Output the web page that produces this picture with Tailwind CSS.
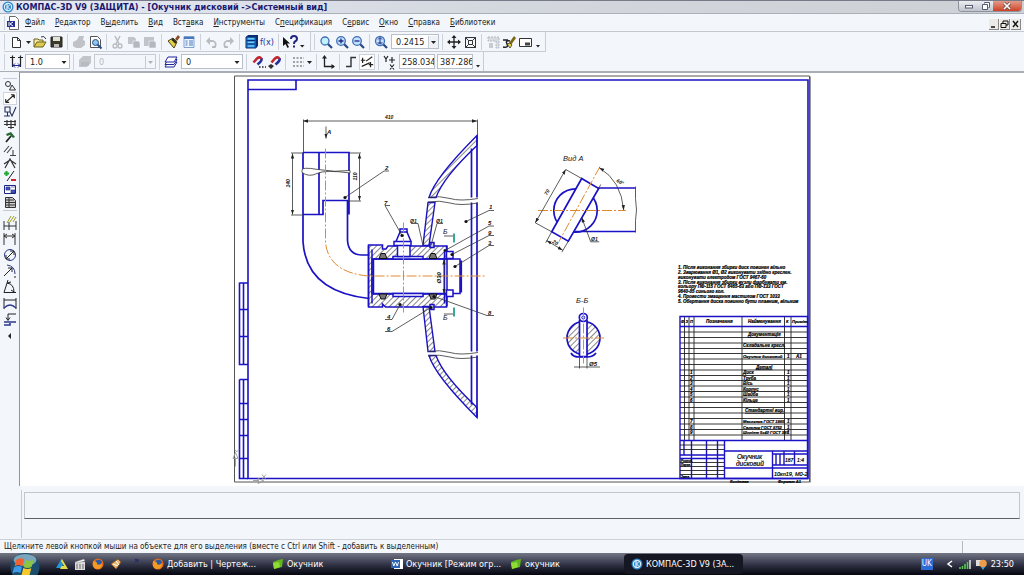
<!DOCTYPE html>
<html lang="uk">

<head>
    <meta charset="UTF-8">
    <meta name="viewport" content="width=device-width, initial-scale=1.0">
    <title>КОМПАС-3D V9</title>
    <script src="https://cdn.jsdelivr.net/npm/@tailwindcss/browser@4"></script>
</head>

<body class="flex flex-col h-screen overflow-hidden bg-[#f3f6fb] font-['DejaVu_Sans_Condensed','DejaVu_Sans',sans-serif] text-[8px] leading-3 text-[#222]">

    <!-- Title bar -->
    <header class="flex h-[14px] shrink-0 items-center border-t border-[#777b88] border-b border-b-[#a9b1bb] bg-linear-to-r from-[#e6e9f3] via-[#d3d7de] to-[#cdd0d4] pl-0.5">
        <svg class="size-3 shrink-0" viewBox="0 0 12 12"><circle cx="6" cy="6" r="5.500" fill="#2e86c8"/><circle cx="6" cy="6" r="3.600" fill="none" stroke="#d8efff" stroke-width="1.200"/><path d="M5 3v6M8 3.500L5.500 6 8 8.500" stroke="#fff" fill="none"/></svg>
        <h1 class="ml-0.5 whitespace-nowrap text-[9px] font-bold text-[#191970]">КОМПАС-3D V9 (ЗАЩИТА) - [Окучник дисковий -&gt;Системный вид]</h1>
        <div class="ml-auto mr-0.5 flex h-[11px] self-start overflow-hidden rounded-b border border-t-0 border-[#8d939c]">
            <button class="flex w-5 items-center justify-center bg-linear-to-b from-[#eceef2] to-[#bfc4cd]" aria-label="Свернуть"><svg class="h-2 w-2.5" viewBox="0 0 10 8"><rect x="1.500" y="3.500" width="7" height="2.500" fill="#fff" stroke="#555b70"/></svg></button>
            <button class="flex w-[14px] items-center justify-center bg-linear-to-b from-[#eceef2] to-[#bfc4cd]" aria-label="Восстановить"><svg class="h-2 w-2.5" viewBox="0 0 10 8"><path d="M3.500 1.500V.5h5v5h-1M1.500 2.500h5v5h-5z" fill="#fff" stroke="#555b70"/></svg></button>
            <button class="flex w-7 items-center justify-center bg-linear-to-b from-[#e39a88] to-[#cc3f22]" aria-label="Закрыть"><svg class="size-2" viewBox="0 0 8 8"><path d="M1 1l6 6M7 1L1 7" stroke="#64433e" stroke-width="3"/><path d="M1 1l6 6M7 1L1 7" stroke="#fff" stroke-width="1.700"/></svg></button>
        </div>
    </header>

    <!-- Menu -->
    <nav class="flex h-[18px] shrink-0 items-center gap-2.5 border-b border-[#c3c7cf] pl-1">
        <div class="flex items-center gap-1 border-l border-[#cfd3da]">
            <svg class="ml-0.5 h-[14px] w-3" viewBox="0 0 12 14"><path d="M2.500.5h6l3 3v10h-9z" fill="#fff" stroke="#666"/><path d="M0 5h8v6H0z" fill="#29308f"/><path d="M2 6v4M6 6L3 8l3 2" stroke="#fff" fill="none"/></svg>
            <a href="#" class="ml-0.5"><u>Ф</u>айл</a>
        </div>
        <a href="#"><u>Р</u>едактор</a>
        <a href="#">В<u>ы</u>делить</a>
        <a href="#"><u>В</u>ид</a>
        <a href="#">Вст<u>а</u>вка</a>
        <a href="#"><u>И</u>нструменты</a>
        <a href="#">С<u>п</u>ецификация</a>
        <a href="#">С<u>е</u>рвис</a>
        <a href="#"><u>О</u>кно</a>
        <a href="#"><u>С</u>правка</a>
        <a href="#"><u>Б</u>иблиотеки</a>
        <div class="ml-auto mr-[3px] flex gap-px self-end pb-px">
            <button class="h-[11px] w-2.5 border-b border-r border-[#888] bg-[#eceae6]" aria-label="Свернуть документ"><svg viewBox="0 0 9 10"><path d="M2 8h4" stroke="#111" stroke-width="1.500"/></svg></button>
            <button class="h-[11px] w-2.5 border-b border-r border-[#888] bg-[#eceae6]" aria-label="Восстановить документ"><svg viewBox="0 0 9 10"><path d="M3 4V2h5v4H6M1 4.500h5v4H1z" fill="none" stroke="#111"/></svg></button>
            <button class="h-[11px] w-2.5 border-b border-r border-[#888] bg-[#eceae6]" aria-label="Закрыть документ"><svg viewBox="0 0 9 10"><path d="M2 2l5 6M7 2L2 8" stroke="#111" stroke-width="1.400"/></svg></button>
        </div>
    </nav>

    <!-- Standard and view toolbars -->
    <div class="flex h-5 shrink-0 pl-1">
        <div class="flex items-center border-b border-r border-[#c8ccd4] pr-1">
            <span class="mr-[3px] h-4 w-px bg-[#cdd1d9]"></span>
            <button class="w-4" aria-label="Создать"><svg viewBox="0 0 16 16"><path d="M4.500 3.500h5l3 3v7h-8z" fill="#fff" stroke="#333"/><path d="M9.500 3.500v3h3" fill="none" stroke="#333"/></svg></button>
            <button class="w-2" aria-label="Список"><svg viewBox="0 0 8 16"><path d="M2 7h5L4.500 10z" fill="#222"/></svg></button>
            <button class="w-4" aria-label="Открыть"><svg viewBox="0 0 16 16"><path d="M2 13V5h4l1 1h4v2" fill="#f5e9a0" stroke="#6b6420"/><path d="M2 13l3-5h9l-3 5z" fill="#e0c952" stroke="#6b6420"/><path d="M9 3q3-2 5 2" fill="none" stroke="#333"/></svg></button>
            <button class="w-4" aria-label="Сохранить"><svg viewBox="0 0 16 16"><path d="M3 3h11v10H3z" fill="#3a3b26" stroke="#222"/><path d="M5 3h7v4H5z" fill="#dfe3dc"/><path d="M6 10h5v3H6z" fill="#bbb"/></svg></button>
            <span class="mx-[3px] h-4 w-px bg-[#cdd1d9]"></span>
            <button class="w-4" aria-label="Печать"><svg viewBox="0 0 16 16"><path d="M2 8l4-2 2-4h5l-1 4 2 1v4l-4 3H5l-3-2z" fill="#c0c2c8"/></svg></button>
            <button class="w-4" aria-label="Просмотр"><svg viewBox="0 0 16 16"><path d="M3.500 2.500h7l3 3v8h-10z" fill="#fff" stroke="#555"/><circle cx="8.500" cy="8.500" r="3" fill="#8fc3e8" stroke="#234f8c"/><path d="M10.500 10.500l4 4" stroke="#234f8c" stroke-width="2"/></svg></button>
            <span class="mx-[3px] h-4 w-px bg-[#cdd1d9]"></span>
            <button class="w-4" aria-label="Вырезать"><svg viewBox="0 0 16 16"><path d="M5 2l4 8M10 2L6 10" stroke="#b8bbc2" stroke-width="1.500"/><circle cx="5" cy="12" r="2" fill="none" stroke="#b8bbc2" stroke-width="1.300"/><circle cx="10" cy="12" r="2" fill="none" stroke="#b8bbc2" stroke-width="1.300"/></svg></button>
            <button class="w-4" aria-label="Копировать"><svg viewBox="0 0 16 16"><path d="M2 3h6l2 2v5H2z" fill="#c2c4ca"/><path d="M7 7h6l1 2v5H7z" fill="#b4b7be" stroke="#f3f6fb" stroke-width=".6"/></svg></button>
            <button class="w-4" aria-label="Вставить"><svg viewBox="0 0 16 16"><path d="M2 3h10v9H2z" fill="#c2c4ca"/><path d="M7 7h6l1 2v5H7z" fill="#b4b7be" stroke="#f3f6fb" stroke-width=".6"/></svg></button>
            <span class="mx-[3px] h-4 w-px bg-[#cdd1d9]"></span>
            <button class="w-4" aria-label="Копировать свойства"><svg viewBox="0 0 16 16"><path d="M10 5l3-4 2 2-3 4z" fill="#8a4d28"/><path d="M3 7l5-3 4 4-3 6z" fill="#e4d14a" stroke="#4c4710"/><path d="M7 5l4 4" stroke="#222" stroke-width="2"/></svg></button>
            <button class="w-4" aria-label="Свойства"><svg viewBox="0 0 16 16"><path d="M3 2.500h10v11H3z" fill="#eef5ff" stroke="#7fa1cf"/><path d="M3 4h10" stroke="#4778bd" stroke-width="2"/><path d="M4.500 7h2M4.500 9h2M4.500 11h2M8 7h4M8 9h4M8 11h4" stroke="#4778bd"/></svg></button>
            <span class="mx-[3px] h-4 w-px bg-[#cdd1d9]"></span>
            <button class="w-4" aria-label="Отменить"><svg viewBox="0 0 16 16"><path d="M4 7h5q4 1 2 6H8" fill="none" stroke="#b8bbc2" stroke-width="1.800"/><path d="M6 3v8L2 7z" fill="#b8bbc2"/></svg></button>
            <button class="w-4" aria-label="Повторить"><svg viewBox="0 0 16 16"><path d="M12 7H7q-4 1-2 6h3" fill="none" stroke="#b8bbc2" stroke-width="1.800"/><path d="M10 3v8l4-4z" fill="#b8bbc2"/></svg></button>
            <span class="mx-[3px] h-4 w-px bg-[#cdd1d9]"></span>
            <button class="w-4" aria-label="Менеджер библиотек"><svg viewBox="0 0 16 16"><path d="M3 3l2-2h10v11l-2 2H3z" fill="#0c2d72"/><path d="M3 3h10v11H3z" fill="#2585d6" stroke="#0c2d72"/><path d="M4 6.500h8M4 10h8" stroke="#0c2d72"/><path d="M5 4.800h6M5 8.300h6M5 12h6" stroke="#8ce4ff"/></svg></button>
            <button class="w-4 text-[9px] text-[#25309b]">f(x)</button>
            <span class="mx-[3px] h-4 w-px bg-[#cdd1d9]"></span>
            <button class="w-4" aria-label="Справка"><svg viewBox="0 0 16 16"><path d="M1 3v9l2.500-2 2 4 1.500-1-2-3.500H8z" fill="#111"/><path d="M9 5q0-3 3-3t3 3q0 1.500-2 2.500-1 .5-1 2.500" fill="none" stroke="#20257f" stroke-width="2"/><path d="M11 11.500h2v2h-2z" fill="#20257f"/></svg></button>
            <button class="w-2" aria-label="Ещё"><svg viewBox="0 0 8 16"><path d="M2 11h4.500L4.200 13.500z" fill="#222"/></svg></button>
        </div>
        <div class="flex items-center border-b border-r border-[#c8ccd4] pr-1">
            <span class="mx-[3px] h-4 w-px bg-[#cdd1d9]"></span>
            <button class="w-4" aria-label="Увеличить рамкой"><svg viewBox="0 0 16 16"><path d="M9.500 9.500l4.500 4.500" stroke="#2a4683" stroke-width="2.200"/><circle cx="7" cy="7" r="4" fill="#c2f0ff" stroke="#3e70b8" stroke-width="1.300"/></svg></button>
            <button class="w-4" aria-label="Увеличить"><svg viewBox="0 0 16 16"><path d="M9.500 9.500l4.500 4.500" stroke="#2a4683" stroke-width="2.200"/><circle cx="7" cy="7" r="4.300" fill="#c2e2ff" stroke="#3e70b8" stroke-width="1.300"/><path d="M7 4.500v5M4.500 7h5" stroke="#20257f" stroke-width="1.300"/></svg></button>
            <button class="w-4" aria-label="Уменьшить"><svg viewBox="0 0 16 16"><path d="M9.500 9.500l4.500 4.500" stroke="#2a4683" stroke-width="2.200"/><circle cx="7" cy="7" r="4.300" fill="#c2e2ff" stroke="#3e70b8" stroke-width="1.300"/><path d="M4.500 7h5" stroke="#20257f" stroke-width="1.300"/></svg></button>
            <span class="mx-[3px] h-4 w-px bg-[#cdd1d9]"></span>
            <button class="w-4" aria-label="Масштаб"><svg viewBox="0 0 16 16"><path d="M9.500 9.500l4.500 4.500" stroke="#2a4683" stroke-width="2.200"/><circle cx="7" cy="7" r="4.500" fill="#c2e2ff" stroke="#3e70b8" stroke-width="1.300"/><path d="M7 4v6M5 5.500L7 3.500l2 2M4.500 9h5" stroke="#20257f" fill="none"/></svg></button>
            <span class="ml-0.5 flex h-[15px] w-12 items-center border border-[#b7bfca] bg-white">
                <select class="w-9 appearance-none pl-1 text-[9px] text-[#222]" aria-label="Текущий масштаб"><option>0.2415</option></select>
                <svg class="ml-auto h-3 w-2.5 border-l border-[#c5cad3] bg-[#eef1f6]" viewBox="0 0 9 12"><path d="M2 5h5L4.500 8z" fill="#222"/></svg>
            </span>
            <span class="mx-[3px] h-4 w-px bg-[#cdd1d9]"></span>
            <button class="w-4" aria-label="Сдвинуть"><svg viewBox="0 0 16 16"><path d="M8 2v12M2 8h12" stroke="#222" stroke-width="1.300"/><path d="M8 1l2.500 3h-5zM8 15l2.500-3h-5zM1 8l3-2.500v5zM15 8l-3-2.500v5z" fill="#222"/></svg></button>
            <button class="w-4" aria-label="Показать все"><svg viewBox="0 0 16 16"><path d="M3.500 3.500h10v10h-10zM6.500 6.500h4v4h-4zM3.500 3.500l3 3M13.500 3.500l-3 3M3.500 13.500l3-3M13.500 13.500l-3-3" fill="none" stroke="#333"/></svg></button>
            <span class="mx-[3px] h-4 w-px bg-[#cdd1d9]"></span>
            <button class="w-4" aria-label="Перестроить"><svg viewBox="0 0 16 16"><path d="M3 3h11v11h-3V7H3z" fill="#d8dbe1" stroke="#b5b9c1" stroke-dasharray="2 1"/><path d="M4 9h4v5H4z" fill="#c8cbd1"/></svg></button>
            <button class="w-4" aria-label="Обновить изображение"><svg viewBox="0 0 16 16"><path d="M2 6h5M2 13q6 1 4-3t3-3" fill="none" stroke="#222" stroke-width="1.500"/><path d="M8 9l5-7 2 2-5 7z" fill="#7b6614"/><path d="M6 10l3-1 2 2-2 3z" fill="#e4d14a" stroke="#222" stroke-width=".7"/></svg></button>
            <button class="w-4" aria-label="Экран"><svg viewBox="0 0 16 16"><path d="M2.500 4.500h12v8h-12z" fill="#fff" stroke="#333"/><path d="M8 8.500h5v3H8z" fill="#444"/></svg></button>
            <button class="w-2" aria-label="Ещё"><svg viewBox="0 0 8 16"><path d="M3 11h4L5 13.500z" fill="#222"/></svg></button>
        </div>
    </div>

    <!-- Current state toolbar -->
    <div class="flex h-5 shrink-0 border-b border-[#a9adb5] pl-1">
        <div class="flex items-center border-r border-[#c8ccd4] pr-0.5">
            <span class="mr-[3px] h-4 w-px bg-[#cdd1d9]"></span>
            <button class="w-4" aria-label="Шаг курсора"><svg viewBox="0 0 16 16"><path d="M4.500 5v8M12.500 5v8" stroke="#222" stroke-width="1.200"/><path d="M2 3.500h5M10 3.500h5M4.500 1.500v4M12.500 1.500v4" stroke="#222" stroke-width="1.200"/><path d="M5 11.500h7M7 9.500l-2 2 2 2M10 9.500l2 2-2 2" fill="none" stroke="#20259a"/></svg></button>
            <span class="ml-px flex h-[15px] w-[45px] items-center border border-[#b7bfca] bg-white">
                <select class="w-7 appearance-none pl-1 text-[9px] text-[#222]" aria-label="Шаг"><option>1.0</option></select>
                <svg class="ml-auto h-3 w-2.5" viewBox="0 0 9 12"><path d="M2 5h5L4.500 8z" fill="#222"/></svg>
            </span>
            <span class="mx-[3px] h-4 w-px bg-[#cdd1d9]"></span>
            <button class="w-4" aria-label="Вид"><svg viewBox="0 0 16 16"><path d="M2 6l4-4h8v7l-4 4H2z" fill="#c3c5cb"/><path d="M4 9h8M4 11h8" stroke="#aeb1b8"/></svg></button>
            <span class="ml-px flex h-[15px] w-[62px] items-center border border-[#c5cad3] bg-[#f3f6fb]">
                <select class="w-10 appearance-none pl-1 text-[9px] text-[#b8bbc2]" aria-label="Номер вида" disabled><option>0</option></select>
                <svg class="ml-auto h-3 w-2.5 border-l border-[#c5cad3]" viewBox="0 0 9 12"><path d="M2 5h5L4.500 8z" fill="#b0b3ba"/></svg>
            </span>
            <span class="mx-[3px] h-4 w-px bg-[#cdd1d9]"></span>
            <button class="w-4" aria-label="Слои"><svg viewBox="0 0 16 16"><path d="M2 13l3-5h9l-3 5z" fill="#fff" stroke="#20259a"/><path d="M2 10.500l3-5h9l-3 5z" fill="#fff" stroke="#20259a"/><path d="M2 8l3-5h9l-3 5z" fill="#fff" stroke="#20259a"/></svg></button>
            <span class="ml-0.5 flex h-[15px] w-[62px] items-center border border-[#b7bfca] bg-white">
                <select class="w-10 appearance-none pl-1 text-[9px] text-[#222]" aria-label="Слой"><option>0</option></select>
                <svg class="ml-auto h-3 w-2.5" viewBox="0 0 9 12"><path d="M2 5h5L4.500 8z" fill="#222"/></svg>
            </span>
            <span class="mx-[3px] h-4 w-px bg-[#cdd1d9]"></span>
            <button class="w-4" aria-label="Установка привязок"><svg viewBox="0 0 16 16"><path d="M3.500 8.500L7 4.500Q10 2 11.500 5" fill="none" stroke="#c1272d" stroke-width="2.600"/><path d="M11.500 4.500q1 2-4 6" fill="none" stroke="#25309b" stroke-width="2.600"/><path d="M9 13h1.500M12 13h1.500M15 13h1" stroke="#222" stroke-width="1.500"/></svg></button>
            <button class="w-4" aria-label="Запретить привязки"><svg viewBox="0 0 16 16"><path d="M5.500 8.500L9 4.500Q12 2 13.500 5" fill="none" stroke="#c1272d" stroke-width="2.600"/><path d="M13.500 4.500q1 2-4 6" fill="none" stroke="#25309b" stroke-width="2.600"/><path d="M2 12l3-2 3 2-3 3z" fill="#333"/></svg></button>
            <span class="mx-[3px] h-4 w-px bg-[#cdd1d9]"></span>
            <button class="w-4" aria-label="Сетка"><svg viewBox="0 0 16 16"><path d="M4 4h11M4 8h11M4 12h11" stroke="#888" stroke-width="1.500" stroke-dasharray="2 1.500"/></svg></button>
            <button class="w-2" aria-label="Список"><svg viewBox="0 0 8 16"><path d="M2 7h5L4.500 10z" fill="#222"/></svg></button>
            <span class="mx-[3px] h-4 w-px bg-[#cdd1d9]"></span>
            <button class="w-4" aria-label="Локальная СК"><svg viewBox="0 0 16 16"><path d="M4.500 3v9.500H14" fill="none" stroke="#222" stroke-width="1.300"/><path d="M4.500 1L7 4.500H2zM15 12.500L11.500 10v5z" fill="#222"/></svg></button>
            <span class="mx-[3px] h-4 w-px bg-[#cdd1d9]"></span>
            <button class="w-4" aria-label="Ортогональное черчение"><svg viewBox="0 0 16 16"><path d="M3 12.500h5v-9h5" fill="none" stroke="#333" stroke-width="1.400"/></svg></button>
            <button class="w-4 border border-[#cdd1d9] bg-white" aria-label="Округление"><svg viewBox="0 0 16 16"><path d="M1 6h5M3 3v6M7 7l7-5M2 13l9-4M10 11h5M12 8v6" stroke="#222" stroke-width="1.400"/></svg></button>
            <span class="mx-[3px] h-4 w-px bg-[#cdd1d9]"></span>
            <svg class="w-4" viewBox="0 0 16 16"><path d="M2 2l2 3 2-3M4 5v3M10 3v6M7 6h6M8 10.500l4 5M12 10.500l-4 5" fill="none" stroke="#222" stroke-width="1.200"/></svg>
            <input class="ml-px h-[15px] w-9 border border-[#b7bfca] bg-white pl-0.5 text-[9px]" aria-label="X" value="258.034">
            <input class="ml-0.5 h-[15px] w-9 border border-[#b7bfca] bg-white pl-0.5 text-[9px]" aria-label="Y" value="387.286">
            <button class="w-2" aria-label="Ещё"><svg viewBox="0 0 8 16"><path d="M3 11h4L5 13.500z" fill="#222"/></svg></button>
        </div>
    </div>

    <main class="flex min-h-0 flex-1">
        <!-- Compact panel -->
        <aside class="flex w-5 shrink-0 flex-col items-center border-r border-[#8f949d] pt-[6px]">
            <div class="flex h-32 w-[14px] flex-col border-t border-[#c5cbe0]">
                <button class="flex-1" aria-label="Геометрия"><svg class="h-full w-full" viewBox="0 0 14 13"><circle cx="5" cy="5" r="2.500" fill="none" stroke="#333"/><path d="M9 6l3.500 5h-6z" fill="none" stroke="#333"/></svg></button>
                <button class="flex-1 border border-[#d0d4dd] bg-white" aria-label="Размеры"><svg class="h-full w-full" viewBox="0 0 14 13"><path d="M2 11L12 2M2 11V7M2 11h4M12 2H8M12 2v4" stroke="#222" stroke-width="1.300"/></svg></button>
                <button class="flex-1" aria-label="Обозначения"><svg class="h-full w-full" viewBox="0 0 14 13"><path d="M2 2h5v5H2zM4.500 7v4M1 11h6M7 7l2 4 4-9" fill="none" stroke="#26305c" stroke-width="1.100"/></svg></button>
                <button class="flex-1" aria-label="Обозначения построения"><svg class="h-full w-full" viewBox="0 0 14 13"><path d="M1 3.500h12M1 6.500h12M5 9.500h6M4 2v6M8 2v9M12 2v6" stroke="#333" stroke-width="1.200"/></svg></button>
                <button class="flex-1" aria-label="Редактирование"><svg class="h-full w-full" viewBox="0 0 14 13"><path d="M3 3l5-2 4 5-2 1-3-3-3 1z" fill="#276b35"/><path d="M8 5l-5 6" stroke="#222" stroke-width="1.800"/></svg></button>
                <button class="flex-1" aria-label="Параметризация"><svg class="h-full w-full" viewBox="0 0 14 13"><path d="M1 8l5-6M4 9l5-6M7 11.500h6M10 11V6" stroke="#444" stroke-width="1.100"/></svg></button>
                <button class="flex-1" aria-label="Измерения"><svg class="h-full w-full" viewBox="0 0 14 13"><path d="M2 11L7 2l5 9M1 7l6-4 6 4" fill="none" stroke="#333" stroke-width="1.200"/></svg></button>
                <button class="flex-1" aria-label="Выделение"><svg class="h-full w-full" viewBox="0 0 14 13"><path d="M1 3.500h5M3.500 1v5" stroke="#1faa35" stroke-width="2"/><path d="M11 1L4 11" stroke="#222"/><path d="M8 10h5" stroke="#d2232a" stroke-width="2"/></svg></button>
                <button class="flex-1" aria-label="Ассоциативные виды"><svg class="h-full w-full" viewBox="0 0 14 13"><path d="M1.500 2.500h11v8h-11z" fill="#fff" stroke="#1c2680"/><path d="M3 4h4v3H3zM8 7h4v3H8zM8 4h4" fill="#4656bd" stroke="#1c2680" stroke-width=".6"/></svg></button>
                <button class="flex-1" aria-label="Спецификация"><svg class="h-full w-full" viewBox="0 0 14 13"><path d="M2.500 1.500h7l3 3v7h-10z" fill="#ccc" stroke="#333"/><path d="M3 4h8M3 6.500h9M3 9h9M6 2v9" stroke="#333"/></svg></button>
            </div>
            <div class="mt-1 flex h-[116px] w-[14px] flex-col border-t border-[#c5cbd6] pt-1">
                <button class="flex-1" aria-label="Авторазмер"><svg class="h-full w-full" viewBox="0 0 14 16"><path d="M1 6v9M13 6v9M1 11h12M6 7v8" stroke="#333"/><path d="M4 8l4-7M7 7l4-6M10 7l3-5" stroke="#9a9a21"/></svg></button>
                <button class="flex-1" aria-label="Линейный размер"><svg class="h-full w-full" viewBox="0 0 14 16"><path d="M1 2v12M12 2v12M1 5h11M4 3L1 5l3 2M9 3l3 2-3 2" stroke="#333" fill="none"/></svg></button>
                <button class="flex-1" aria-label="Диаметральный размер"><svg class="h-full w-full" viewBox="0 0 14 16"><circle cx="7" cy="8" r="5.500" fill="none" stroke="#2b388c"/><path d="M3 12l8-8M3 12V8M3 12h4M11 4H7M11 4v4" stroke="#222"/></svg></button>
                <button class="flex-1" aria-label="Радиальный размер"><svg class="h-full w-full" viewBox="0 0 14 16"><path d="M4 2q8 1 8 9" fill="none" stroke="#2b388c"/><path d="M1 13l8-8M9 5H5M9 5v4M11 14h2" stroke="#222"/></svg></button>
                <button class="flex-1" aria-label="Угловой размер"><svg class="h-full w-full" viewBox="0 0 14 16"><path d="M1 13.500L5 1M1 13.500h12M4 4q7 1 7 9M4 4l4-1M11 13l-3-2" stroke="#222" fill="none"/></svg></button>
                <button class="flex-1" aria-label="Размер дуги"><svg class="h-full w-full" viewBox="0 0 14 16"><path d="M1 3v11M13 3v11M1 5h12" stroke="#222"/><path d="M1 13q6-6 12 0" fill="none" stroke="#2b388c" stroke-width="1.300"/></svg></button>
                <button class="flex-1" aria-label="Размер высоты"><svg class="h-full w-full" viewBox="0 0 14 16"><path d="M5 9V3h8M3 6.500l2 3 2-3" fill="none" stroke="#222"/><path d="M1 11h12M1 14h6v-2" fill="none" stroke="#2b388c" stroke-width="1.600"/></svg></button>
            </div>
            <button class="mt-1 w-[14px]" aria-label="Свернуть панель"><svg viewBox="0 0 14 12"><path d="M8 3v6L5 6z" fill="#222"/></svg></button>
        </aside>

        <!-- Drawing -->
        <section class="min-w-0 flex-1 border-t border-[#a9adb5] bg-white">
            <svg class="block h-full w-full" viewBox="20 73 1004 414" preserveAspectRatio="xMidYMid slice" font-family="'Liberation Sans',sans-serif" font-style="italic">
                <defs>
                    <pattern id="hatch" width="4" height="4" patternUnits="userSpaceOnUse" patternTransform="rotate(45)"><path d="M0 0v4" stroke="#222" stroke-width="1.100"/></pattern>
                    <marker id="arrow" viewBox="0 0 6 4" refX="6" refY="2" markerWidth="5" markerHeight="4" markerUnits="userSpaceOnUse" orient="auto-start-reverse"><path d="M0 0l6 2-6 2z" fill="#222"/></marker>
                </defs>

                <!-- sheet and frame -->
                <path d="M234.500 76.500h575v406h-575z" fill="#fff" stroke="#555"/>
                <path d="M810.500 77v406" stroke="#999"/>
                <g fill="none" stroke="#1a12c4" stroke-width="1.600">
                    <path d="M248 80.500h560V479H248zM248 90h48v-9.500"/>
                    <path d="M239.500 283.500H248M239.500 283v82H248M239.500 310H248M239.500 337H248M239.500 380H248M239.500 380v99H248M239.500 404H248M239.500 420H248M239.500 436H248M239.500 459H248M243.500 283v82M243.500 380v99"/>
                </g>
                <g fill="none" stroke="#999" stroke-width=".9">
                    <path d="M235.500 467v-9M233 459l2.500-6 2.500 6zM253 481h6M258 484v-5l6 2.500z"/>
                    <path d="M235 450l1.500 2.500L239 450M262 475l4 5M266 475l-4 5"/>
                </g>

                <!-- bent pipe -->
                <g fill="none" stroke="#1a12c4" stroke-width="1.700">
                    <path d="M303 153h46v62M303 153v89q3 50 66 57M319 153v62M303 215h20v-14h25M347.500 201v40q1 14 14 14.500h8"/>
                </g>
                <path d="M302 173q7 5 15 1t33-.5v-2.500q-15 2-32-1t-16 1z" fill="#fff" stroke="#333" stroke-width=".8"/>

                <!-- disc -->
                <g stroke="#1a12c4" stroke-width="1.400">
                    <path d="M477 136q-42 42-48 62h7q7-20 41-52z" fill="url(#hatch)"/>
                    <path d="M428 203l-5 43h6l6-43z" fill="url(#hatch)"/>
                    <path d="M477 418q-42-42-48-62h7q7 20 41 52z" fill="url(#hatch)"/>
                    <path d="M428 352l-5-45h6l6 45z" fill="url(#hatch)"/>
                    <path d="M477 136v62M477 203v149M477 356v62M471.500 149v49M471.500 203v149M471.500 356v49" stroke-width="1.700"/>
                </g>
                <path d="M428 198q12-2 22 1t28 0M428 202.500q12-2 22 1t28 0M428 352q12-2 22 1t28 0M428 356.500q12-2 22 1t28 0" fill="none" stroke="#333" stroke-width=".8"/>

                <!-- hub -->
                <g stroke="#1a12c4" stroke-width="1.500">
                    <path d="M368.500 245.500h14v4h3.500l2-3h58.500v13h-73v35h73v13h-61l-3-3v3h-14z" fill="url(#hatch)"/>
                    <path d="M372 259.500h88v34.500h-88z" fill="none"/>
                    <path d="M372 250v54M368.500 246v61M444.500 250v54M447 246v61" fill="none"/>
                    <path d="M461 261v32" stroke-width="2.200"/>
                    <path d="M446.500 252h6.500v7h-6.500zM446.500 290.500h6.500v6.500h-6.500zM393 257h30v2.500h-30zM393 294h30v3h-30z" fill="#fff"/>
                    <path d="M397.500 246v11h12.500v-11zM394 242h17v4h-17zM400 229.500h7v3l4 9.500h-15l4-9.500z" fill="#fff"/>
                    <path d="M399.500 232.500h8" fill="none"/>
                    <path d="M430 243h4v5h-4zM430 305h4v5h-4z" fill="#ccd"/>
                </g>
                <g fill="#777" stroke="#111">
                    <path d="M381 254h4l2 5h-8zM431 254h4l2 5h-8zM379 294.500h8l-2 5h-4zM429 294.500h8l-2 5h-4z"/>
                </g>
                <path d="M454 234v9M454 308v9" stroke="#139c84" stroke-width="1.700"/>

                <!-- centre lines -->
                <path d="M325.500 149v94q3 30 43 33.500h118M403.500 223v90" fill="none" stroke="#e08a30" stroke-width="1" stroke-dasharray="10 2 2 2"/>

                <!-- dimensions and leaders -->
                <g fill="none" stroke="#333" stroke-width=".8">
                    <path d="M303 121.500h174" marker-start="url(#arrow)" marker-end="url(#arrow)"/>
                    <path d="M303.500 120v33M477.500 120v17M291 153.500h12M291 215.500h12M349 153.500h12M348 201.500h13"/>
                    <path d="M292.500 154v61" marker-start="url(#arrow)" marker-end="url(#arrow)"/>
                    <path d="M359.500 154v47" marker-start="url(#arrow)" marker-end="url(#arrow)"/>
                    <path d="M326 127v12" marker-end="url(#arrow)"/>
                    <path d="M345 198l39-26.500h5M402 236l-17-30h5M466 222l23-11h5M445 251l44-24.500h5M452 255l37-19h5M455 267l34-21h5M434 297l53 19h7M400 305l-8 15h-7M431 308l-39 24h-7"/>
                    <path d="M423 246l-5-22h-7M431 246l6-22h6M444 236.500h9M444 314.500h9"/>
                    <path d="M444 260v34" marker-start="url(#arrow)" marker-end="url(#arrow)"/>
                </g>
                <g fill="#111">
                    <circle cx="345" cy="198" r="1.600"/><circle cx="402" cy="236" r="1.600"/><circle cx="466" cy="222" r="1.600"/>
                    <circle cx="445" cy="251" r="1.300"/><circle cx="452" cy="255" r="1.600"/><circle cx="455" cy="267" r="1.600"/>
                    <circle cx="434" cy="297" r="1.600"/><circle cx="400" cy="305" r="1.600"/><circle cx="431" cy="308" r="1.600"/>
                </g>
                <g font-size="6" fill="#111" font-weight="bold">
                    <text x="385" y="119" font-size="5">410</text>
                    <text transform="translate(290 188) rotate(-90)" font-size="5">140</text>
                    <text transform="translate(357 181) rotate(-90)" font-size="5">110</text>
                    <text x="327" y="134">А</text>
                    <text x="385" y="170">2</text>
                    <text x="384" y="205">7</text>
                    <text x="489" y="209">1</text>
                    <text x="488" y="225">5</text>
                    <text x="488" y="235">9</text>
                    <text x="488" y="245">3</text>
                    <text x="488" y="315">8</text>
                    <text x="387" y="319">4</text>
                    <text x="387" y="331">6</text>
                    <text x="410" y="223" font-size="5">Ø1</text>
                    <text x="436" y="223" font-size="5">Ø1</text>
                    <text transform="translate(441 284) rotate(-90)">Ø30</text>
                    <text x="443" y="234" font-size="7" font-weight="normal">Б</text>
                    <text x="443" y="320" font-size="7" font-weight="normal">Б</text>
                </g>

                <!-- view A -->
                <text x="563" y="161.500" font-size="7.500" fill="#111">Вид А</text>
                <g fill="none" stroke="#1a12c4" stroke-width="1.700">
                    <circle cx="575.500" cy="211" r="21.700"/>
                    <path d="M598 188.500h37.500M575 232h60.500"/>
                    <path d="M581.700 179l17 10-30.400 52.700-16.600-9.400z" fill="#fff"/>
                </g>
                <path d="M600 167l-41 75M538 211h88" stroke="#e08a30" stroke-dasharray="10 2 2 2"/>
                <g fill="none" stroke="#333" stroke-width=".8">
                    <path d="M635.500 187v12q2 12 0 22v12M565.700 170l16 9M535.300 223.300l16.400 9M551.700 232.300l-6 11M568.300 241.700l-6.500 11M598.700 189l2-4"/>
                    <path d="M565.700 170l-30.400 53.300" marker-start="url(#arrow)" marker-end="url(#arrow)"/>
                    <path d="M546.700 241l16 9.700" marker-start="url(#arrow)" marker-end="url(#arrow)"/>
                    <path d="M599.300 168.300q22 13 24.400 42.400" marker-start="url(#arrow)" marker-end="url(#arrow)"/>
                    <path d="M581.700 218l9 24.300h8.500" marker-start="url(#arrow)"/>
                </g>
                <g font-size="5" font-weight="bold" fill="#111">
                    <text x="591" y="241">Ø1</text>
                    <text transform="translate(547 196) rotate(-60)">70</text>
                    <text transform="translate(552 243) rotate(30)">20</text>
                    <text transform="translate(616 182) rotate(30)">60°</text>
                </g>

                <!-- section B-B -->
                <text x="576" y="303" font-size="7.500" fill="#111">Б-Б</text>
                <g stroke="#1a12c4" stroke-width="1.700">
                    <circle cx="583.500" cy="338.500" r="16.500" fill="url(#hatch)"/>
                    <path d="M579.500 321h7.500v36h-7.500z" fill="#fff"/>
                    <circle cx="583.300" cy="318" r="4" fill="#fff"/>
                    <circle cx="583.300" cy="318" r="1.500" fill="none" stroke-width="1"/>
                    <path d="M571 353.500q2 4 8 4h8q6 0 9-4" fill="none"/>
                </g>
                <path d="M583.500 308v56M563 338.500h41" stroke="#e08a30" stroke-dasharray="10 2 2 2"/>
                <path d="M579.500 358v11M587 358v11M574 367.500h26" stroke="#333" stroke-width=".8"/>
                <text x="589" y="366" font-size="6" font-weight="bold" fill="#111">Ø5</text>

                <!-- technical notes -->
                <g font-size="4.500" font-weight="bold" fill="#000" stroke="#000" stroke-width=".2">
                    <text x="678" y="269">1. Після виконання збирки диск повинен вільно</text>
                    <text x="678" y="274">2. Зварювання Ø1, Ø2 виконувати згідно креслен.</text>
                    <text x="678" y="279">виконувати електродом ГОСТ 9467-60</text>
                    <text x="678" y="284">3. Після виконання збирки вузли фарбувати ем.</text>
                    <text x="678" y="288.500">кольору ПФ-115 ГОСТ 6465-63 або ПФ-133 ГОСТ</text>
                    <text x="678" y="293.500">9640-85 синього кол.</text>
                    <text x="678" y="298.500">4. Провести змащення мастилом ГОСТ 1033</text>
                    <text x="678" y="303.500">5. Обертання диска повинно бути плавним, вільним</text>
                </g>

                <!-- specification -->
                <g fill="none">
                    <path d="M680 332.500h127M680 338h127M680 343.500h127M680 349h127M680 354h127M680 359.500h127M680 365h127M680 370.500h127M680 376h127M680 381h127M680 386.500h127M680 392h127M680 397.500h127M680 403h127M680 408h127M680 413.500h127M680 419h127M680 424.500h127M680 430h127M680 435.500h127M684.500 317v124M689 317v124M694 317v124M742 317v124M784.500 317v124M791 317v124" stroke="#222" stroke-width=".9"/>
                    <path d="M680 317h127.500v162H680zM680 327h127M680 441h127M684 441v14M691.500 441v38M706.500 441v38M717.500 441v38M724.500 441v38M724 451.500h83M724 468.500h83M772.500 451.500v27M680 455.500h44M680 459h44M772 454.500h35M772 465.500h35M784 451.500v14M794.500 451.500v14M776 454.500v11M780 454.500v11" stroke="#1a12c4" stroke-width="1.400"/>
                    <path d="M680 445.500h44M680 450h44M680 463h44M680 467h44M680 471h44M680 475h44" stroke="#222" stroke-width=".9"/>
                </g>
                <g font-size="4.500" font-weight="bold" fill="#000" stroke="#000" stroke-width=".2">
                    <text x="706" y="323.500">Позначення</text>
                    <text x="748" y="323.500">Найменування</text>
                    <text x="792" y="323.500" font-size="4">Приміт.</text>
                    <text x="681" y="323.500" font-size="4">Ф</text>
                    <text x="685.500" y="323.500" font-size="4">З</text>
                    <text x="690" y="323.500" font-size="4">П</text>
                    <text x="786" y="323.500" font-size="4">К</text>
                    <text x="748" y="336.500" text-decoration="underline">Документація</text>
                    <text x="743" y="347.500" text-decoration="underline">Складальне кресл.</text>
                    <text x="743" y="358" font-size="4.300">Окучник дисковий</text><text x="787" y="358">1</text><text x="796" y="358">А1</text>
                    <text x="756" y="369" text-decoration="underline">Деталі</text>
                    <text x="743" y="374.500">Диск</text><text x="690" y="374.500">1</text><text x="787" y="374.500">1</text>
                    <text x="743" y="380">Труба</text><text x="690" y="380">2</text><text x="787" y="380">1</text>
                    <text x="743" y="385.500">Вісь</text><text x="690" y="385.500">3</text><text x="787" y="385.500">1</text>
                    <text x="743" y="391">Корпус</text><text x="690" y="391">4</text><text x="787" y="391">1</text>
                    <text x="743" y="396.500">Шайба</text><text x="690" y="396.500">5</text><text x="787" y="396.500">1</text>
                    <text x="743" y="402">Кільце</text><text x="690" y="402">6</text><text x="787" y="402">1</text>
                    <text x="745" y="412.500" text-decoration="underline">Стандартні вир.</text>
                    <text x="743" y="423.500" font-size="4">Маслянка ГОСТ 1985</text><text x="690" y="423.500">7</text><text x="787" y="423.500">1</text>
                    <text x="743" y="429" font-size="4">Сальник ГОСТ 8752</text><text x="690" y="429">8</text><text x="787" y="429">1</text>
                    <text x="743" y="434.500" font-size="4">Шплінт 5х40 ГОСТ 397</text><text x="690" y="434.500">9</text><text x="787" y="434.500">1</text>
                    <text x="681" y="462.500" font-size="3">Розроб.</text>
                    <text x="681" y="466.500" font-size="3">Перев.</text>
                    <text x="681" y="478.500" font-size="3">Затв.</text>
                    <text x="730" y="483" font-size="4">Копіював</text>
                    <text x="778" y="483" font-size="4">Формат А1</text>
                </g>
                <g font-size="6.500" fill="#000" stroke="#000" stroke-width=".2">
                    <text x="737" y="459">Окучник</text>
                    <text x="736" y="466">дисковий</text>
                    <text x="785" y="462.500" font-size="5">187</text>
                    <text x="797" y="462.500" font-size="5">1:4</text>
                    <text x="774" y="476" font-size="5.500">10кп19, М0-2</text>
                </g>
            </svg>
        </section>
    </main>

    <!-- Property panel -->
    <div class="ml-[21px] mt-1 flex h-12 shrink-0 border-l border-[#c8ccd4] pl-0.5">
        <div class="mr-1 mt-[2px] h-[27px] flex-1 border border-[#c3c7cc] border-b-[#5c6068]"></div>
    </div>

    <!-- Status bar -->
    <footer class="mt-px flex h-[14px] shrink-0 items-center border-t border-[#cdd1d7]">
        <p class="ml-1 flex-1 whitespace-nowrap">Щелкните левой кнопкой мыши на объекте для его выделения (вместе с Ctrl или Shift - добавить к выделенным)</p>
        <span class="h-3 w-[62px] border-l border-[#b5b9c1]"></span>
    </footer>

    <!-- Taskbar -->
    <div class="flex h-[22px] shrink-0 items-center overflow-hidden bg-linear-to-b from-[#737785] via-[#34374a] to-[#05060f] pl-2 text-[9px] text-white">
        <button class="h-[22px] w-9" aria-label="Пуск"><svg viewBox="0 0 36 22"><circle cx="17" cy="14.500" r="14.500" fill="#1c4d6d"/><ellipse cx="17" cy="7" rx="11.500" ry="6" fill="#7ba5bb"/><path d="M8 7q4-3 8-.5L14.500 13Q11 11 6.500 13.500z" fill="#ee6232"/><path d="M17.500 7q4 2 8 0L23.500 14q-4 2-8 0z" fill="#8cc63f"/><path d="M6 14.500q4-2.500 8-.5L12.500 20q-4-2-8 .5z" fill="#3c9be8"/><path d="M15.300 15q4 2 8 .3L21.500 22h-8z" fill="#fbc927"/></svg></button>
        <div class="ml-3 flex w-[96px] shrink-0 items-center gap-1.5">
            <svg class="size-3 shrink-0" viewBox="0 0 12 12"><path d="M6 0L0 10h7z" fill="#2398d5"/><path d="M6 1l6 10H4l1.500-3H8L5 3z" fill="#e4d94b"/></svg>
            <svg class="size-3 shrink-0" viewBox="0 0 12 12"><path d="M1 4h10v8H1z" fill="#ddd"/><path d="M1 4l9-3 1 2-8 2z" fill="#fff" stroke="#777" stroke-width=".5"/><path d="M3 6v5M6 6v5M9 6v5" stroke="#666"/></svg>
            <svg class="size-3 shrink-0" viewBox="0 0 12 12"><circle cx="6" cy="6" r="5.500" fill="#e96b16"/><circle cx="6.500" cy="5" r="3.300" fill="#285aa8"/><path d="M1 3q5 1 4 3 2 2 5-1 0 6-5 6T1 3z" fill="#f49a24"/></svg>
            <svg class="size-3 shrink-0" viewBox="0 0 12 12"><path d="M1 6l7-5 3 3-5 7z" fill="#eab66a" stroke="#8c5723"/><path d="M3 6l5 2M6 3l3 4" stroke="#fff"/></svg>
            <span class="ml-1.5 pb-2 font-bold text-[#1a2070]">»</span>
        </div>
        <button class="flex w-[120px] shrink-0 items-center gap-[3px] whitespace-nowrap"><svg class="size-3" viewBox="0 0 12 12"><circle cx="6" cy="6" r="5.500" fill="#e96b16"/><circle cx="6.500" cy="5" r="3.300" fill="#285aa8"/><path d="M1 3q5 1 4 3 2 2 5-1 0 6-5 6T1 3z" fill="#f49a24"/></svg>Добавить | Чертеж...</button>
        <button class="flex w-[119px] shrink-0 items-center gap-[3px] whitespace-nowrap"><svg class="size-3" viewBox="0 0 12 12"><path d="M1 4l5-2 5-1-1 8-8 2z" fill="#61b51e"/><path d="M1 5l6-1 1 5-6 2z" fill="#8fdc37"/></svg>Окучник</button>
        <button class="flex w-[119px] shrink-0 items-center gap-[3px] whitespace-nowrap"><svg class="size-3" viewBox="0 0 12 12"><path d="M3 1h9v10H3z" fill="#fff"/><path d="M0 2h9v8H0z" fill="#2c63b4"/><path d="M1.500 4l1.300 4L4.500 4l1.700 4L7.500 4" fill="none" stroke="#fff"/></svg>Окучник [Режим огр...</button>
        <button class="flex w-[114px] shrink-0 items-center gap-[3px] whitespace-nowrap"><svg class="size-3" viewBox="0 0 12 12"><path d="M1 4l5-2 5-1-1 8-8 2z" fill="#61b51e"/><path d="M1 5l6-1 1 5-6 2z" fill="#8fdc37"/></svg>окучник</button>
        <button class="flex h-5 w-[119px] shrink-0 items-center gap-[3px] whitespace-nowrap rounded-sm bg-[#151723] pl-[7px]"><svg class="size-3" viewBox="0 0 12 12"><circle cx="6" cy="6" r="5.500" fill="#2e86c8"/><circle cx="6" cy="6" r="3.600" fill="none" stroke="#d8efff" stroke-width="1.200"/><path d="M5 3v6M8 3.500L5.500 6 8 8.500" stroke="#fff" fill="none"/></svg>КОМПАС-3D V9 (ЗА...</button>
        <div class="ml-auto mr-2.5 flex items-center gap-1">
            <span class="bg-[#2f6bd6] px-px text-[8px]">UK</span>
            <svg class="ml-2 size-2.5" viewBox="0 0 10 10"><path d="M7 2L3 5l4 3" stroke="#fff" stroke-width="1.500" fill="none"/></svg>
            <svg class="h-2.5 w-3" viewBox="0 0 12 10"><path d="M1 10V8M3.500 10V7M6 10V5M8.500 10V3" stroke="#5cc755" stroke-width="1.600"/><path d="M11 10V1" stroke="#ddd" stroke-width="1.600"/></svg>
            <svg class="size-3" viewBox="0 0 12 12"><path d="M1 2h6v6H1z" fill="#ddd"/><circle cx="8" cy="5.500" r="3.800" fill="#eb9d4b"/><path d="M6 9h4l-2 3z" fill="#39a7dd"/></svg>
            <time>23:50</time>
        </div>
    </div>
</body>

</html>
